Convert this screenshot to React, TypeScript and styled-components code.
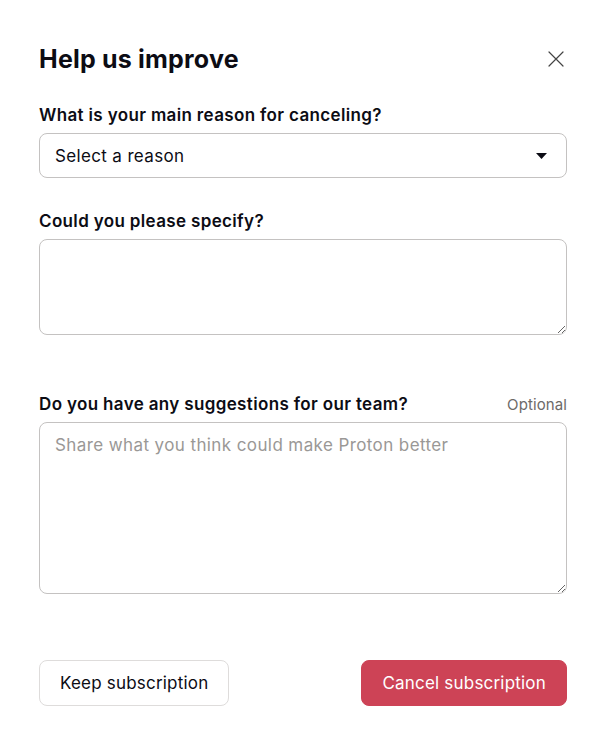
import React from "react";
import styled, { createGlobalStyle } from "styled-components";

const GlobalStyle = createGlobalStyle`
  body {
    margin: 0;
    background: #ffffff;
    font-family: Inter, "Noto Sans", sans-serif;
    color: #0c0c14;
  }
  * {
    box-sizing: border-box;
  }
`;

const App = () => {
  return (
    <Modal>
      <GlobalStyle />
      <Header>
        <Title>Help us improve</Title>
        <CloseButton aria-label="Close">
          <svg width="18" height="18" viewBox="0 0 18 18">
            <path
              d="M2 2 L16 16 M16 2 L2 16"
              stroke="#444"
              strokeWidth="1.2"
              strokeLinecap="round"
            />
          </svg>
        </CloseButton>
      </Header>

      <Field $top={28}>
        <LabelRow>
          <Label>What is your main reason for canceling?</Label>
        </LabelRow>
        <SelectBox>
          <span>Select a reason</span>
          <svg width="11" height="6" viewBox="0 0 11 6">
            <path d="M0 0 H11 L5.5 6 Z" fill="#0c0c14" />
          </svg>
        </SelectBox>
      </Field>

      <Field $top={31}>
        <LabelRow>
          <Label>Could you please specify?</Label>
        </LabelRow>
        <TextArea $height={96} />
      </Field>

      <Field $top={57}>
        <LabelRow>
          <Label>Do you have any suggestions for our team?</Label>
          <Hint>Optional</Hint>
        </LabelRow>
        <TextArea
          $height={172}
          placeholder="Share what you think could make Proton better"
        />
      </Field>

      <Footer>
        <Button>Keep subscription</Button>
        <Button $danger>Cancel subscription</Button>
      </Footer>
    </Modal>
  );
};

export default App;

const Modal = styled.div`
  width: 602px;
  min-height: 742px;
  padding: 43px 35px 0 39px;
  display: flex;
  flex-direction: column;
`;

const Header = styled.div`
  display: flex;
  align-items: center;
  justify-content: space-between;
  height: 32px;
`;

const Title = styled.h1`
  margin: 0;
  font-size: 25px;
  line-height: 32px;
  font-weight: 700;
  letter-spacing: 0.2px;
`;

const CloseButton = styled.button`
  border: none;
  background: transparent;
  padding: 0;
  width: 20px;
  height: 20px;
  margin-right: 1px;
  display: flex;
  align-items: center;
  justify-content: center;
`;

const Field = styled.div<{ $top: number }>`
  margin-top: ${(p) => p.$top}px;
  display: flex;
  flex-direction: column;
  gap: 6px;
`;

const LabelRow = styled.div`
  display: flex;
  align-items: baseline;
  justify-content: space-between;
  height: 24px;
`;

const Label = styled.label`
  font-size: 17px;
  line-height: 24px;
  font-weight: 600;
  letter-spacing: 0.35px;
`;

const Hint = styled.span`
  font-size: 15px;
  color: #6d6a68;
  letter-spacing: 0.1px;
`;

const SelectBox = styled.div`
  height: 45px;
  border: 1px solid #c4c2c1;
  border-radius: 8px;
  display: flex;
  align-items: center;
  justify-content: space-between;
  padding: 0 19px 0 15px;
  font-size: 17px;
  letter-spacing: 0.35px;
`;

const TextArea = styled.textarea<{ $height: number }>`
  height: ${(p) => p.$height}px;
  border: 1px solid #c4c2c1;
  border-radius: 8px;
  padding: 10px 15px;
  font-family: Inter, "Noto Sans", sans-serif;
  font-size: 17px;
  line-height: 24px;
  letter-spacing: 0.4px;
  color: #0c0c14;
  resize: vertical;
  outline: none;

  &::placeholder {
    color: #9a9896;
  }
`;

const Footer = styled.div`
  margin-top: 66px;
  display: flex;
  justify-content: space-between;
`;

const Button = styled.button<{ $danger?: boolean }>`
  height: 46px;
  padding: 0 20px;
  border-radius: 8px;
  font-family: Inter, "Noto Sans", sans-serif;
  font-size: 17px;
  letter-spacing: 0.2px;
  border: 1px solid ${(p) => (p.$danger ? "#cd4356" : "#dedcdb")};
  background: ${(p) => (p.$danger ? "#cd4356" : "#ffffff")};
  color: ${(p) => (p.$danger ? "#ffffff" : "#0c0c14")};
`;
